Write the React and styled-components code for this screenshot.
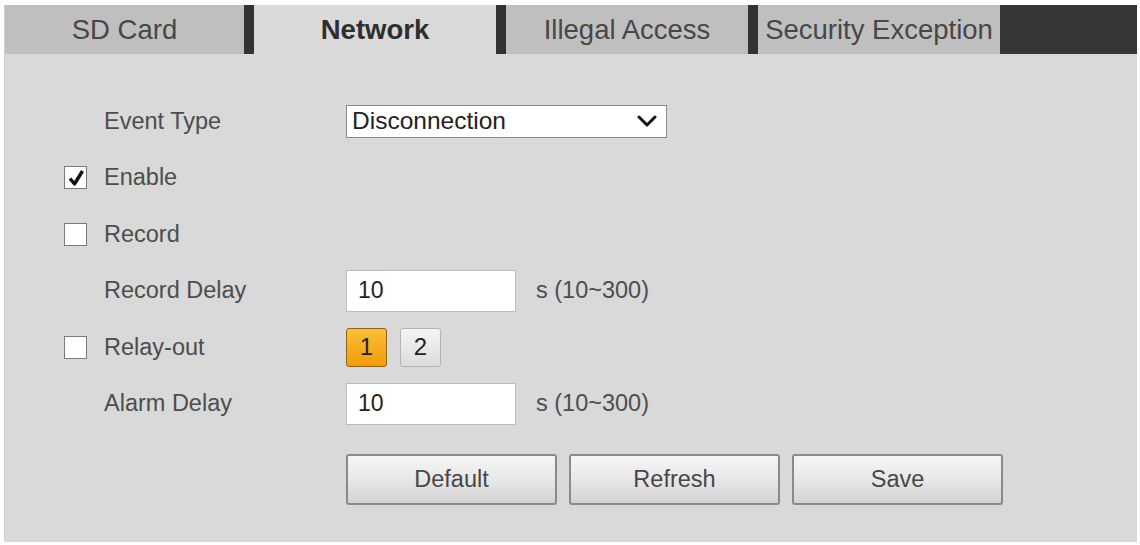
import React, { useState } from 'react';
import styled, { createGlobalStyle } from 'styled-components';

const GlobalStyle = createGlobalStyle`
  html, body {
    margin: 0;
    background: #ffffff;
    font-family: "Liberation Sans", Arial, sans-serif;
  }
`;

const tabs = ['SD Card', 'Network', 'Illegal Access', 'Security Exception'];

const Chevron = () => (
  <svg width="20" height="12" viewBox="0 0 20 12">
    <path d="M2 2 L10 10 L18 2" fill="none" stroke="#111" strokeWidth="3" strokeLinecap="round" strokeLinejoin="round" />
  </svg>
);

const Check = () => (
  <svg width="18" height="18" viewBox="0 0 18 18">
    <path d="M3 9.5 L7.5 15 L15.5 2" fill="none" stroke="#111" strokeWidth="3.4" strokeLinejoin="round" />
  </svg>
);

const App = () => {
  const [active, setActive] = useState(1);
  const [enable, setEnable] = useState(true);
  const [record, setRecord] = useState(false);
  const [relay, setRelay] = useState(false);
  const [channel, setChannel] = useState(1);

  return (
    <>
      <GlobalStyle />
      <Panel>
        <TabBar>
          {tabs.map((t, i) => (
            <Tab key={t} $active={i === active} $first={i === 0} onClick={() => setActive(i)}>
              {t}
            </Tab>
          ))}
          <TabFiller />
        </TabBar>

        <Form>
          <Cell />
          <Label>Event Type</Label>
          <Select>
            <span>Disconnection</span>
            <Chevron />
          </Select>

          <Cell>
            <CheckBox onClick={() => setEnable(!enable)}>{enable && <Check />}</CheckBox>
          </Cell>
          <Label>Enable</Label>
          <Cell />

          <Cell>
            <CheckBox onClick={() => setRecord(!record)}>{record && <Check />}</CheckBox>
          </Cell>
          <Label>Record</Label>
          <Cell />

          <Cell />
          <Label>Record Delay</Label>
          <Field>
            <Input defaultValue="10" />
            <Hint>s (10~300)</Hint>
          </Field>

          <Cell>
            <CheckBox onClick={() => setRelay(!relay)}>{relay && <Check />}</CheckBox>
          </Cell>
          <Label>Relay-out</Label>
          <Field>
            {[1, 2].map((n) => (
              <Channel key={n} $on={channel === n} onClick={() => setChannel(n)}>
                {n}
              </Channel>
            ))}
          </Field>

          <Cell />
          <Label>Alarm Delay</Label>
          <Field>
            <Input defaultValue="10" />
            <Hint>s (10~300)</Hint>
          </Field>
        </Form>

        <Actions>
          <Button>Default</Button>
          <Button>Refresh</Button>
          <Button>Save</Button>
        </Actions>
      </Panel>
    </>
  );
};

const Panel = styled.div`
  margin: 5px 3px 0 5px;
  height: 537px;
  background: #d9d9d9;
  display: flex;
  flex-direction: column;
  box-shadow: -1px 0 0 #cfcfcf;
`;

const TabBar = styled.div`
  display: flex;
  height: 49px;
  flex-shrink: 0;
`;

const Tab = styled.div`
  width: ${(p) => (p.$first ? '239px' : '242px')};
  border-left: ${(p) => (p.$first ? 'none' : '10px solid #333')};
  background: ${(p) => (p.$active ? '#d9d9d9' : '#bfbfbf')};
  color: ${(p) => (p.$active ? '#2e2e2e' : '#474747')};
  font-weight: ${(p) => (p.$active ? 700 : 400)};
  font-size: 27.5px;
  display: flex;
  align-items: center;
  justify-content: center;
  white-space: nowrap;
  cursor: pointer;
`;

const TabFiller = styled.div`
  flex: 1;
  background: #363636;
`;

const Form = styled.div`
  display: grid;
  grid-template-columns: 40px 242px 1fr;
  grid-auto-rows: 56.5px;
  padding: 39px 0 0 59px;
  align-items: center;
`;

const Cell = styled.div`
  display: flex;
  align-items: center;
`;

const Label = styled.div`
  font-size: 23.5px;
  color: #4d4d4d;
`;

const CheckBox = styled.div`
  width: 21px;
  height: 21px;
  background: #fff;
  border: 1px solid #7a7a7a;
  display: flex;
  align-items: center;
  justify-content: center;
  cursor: pointer;
`;

const Select = styled.div`
  width: 321px;
  height: 33px;
  box-sizing: border-box;
  background: #fff;
  border: 1px solid #8c8c8c;
  display: flex;
  align-items: center;
  justify-content: space-between;
  padding: 0 9px 0 5px;
  font-size: 24.5px;
  color: #222;
`;

const Field = styled.div`
  display: flex;
  align-items: center;
  gap: 13px;
`;

const Input = styled.input`
  width: 170px;
  height: 42px;
  box-sizing: border-box;
  border: 1px solid #bcbcbc;
  background: #fff;
  padding: 0 11px;
  font-family: inherit;
  font-size: 23px;
  color: #222;
  outline: none;
  margin-right: 7px;
`;

const Hint = styled.span`
  font-size: 23.5px;
  color: #4d4d4d;
`;

const Channel = styled.div`
  width: 41px;
  height: 39px;
  box-sizing: border-box;
  border-radius: 3px;
  border: 1px solid ${(p) => (p.$on ? '#8f6418' : '#b4b4b4')};
  background: ${(p) => (p.$on ? 'linear-gradient(#fbbf3a, #f29c07)' : 'linear-gradient(#f5f5f5, #dcdcdc)')};
  color: #222;
  font-size: 24px;
  display: flex;
  align-items: center;
  justify-content: center;
  cursor: pointer;
`;

const Actions = styled.div`
  display: flex;
  gap: 12px;
  padding: 22px 0 0 341px;
`;

const Button = styled.button`
  width: 211px;
  height: 51px;
  border: 2px solid #8a8a8a;
  border-radius: 3px;
  background: linear-gradient(#f6f6f6, #e6e6e6 55%, #d2d2d2);
  font-family: inherit;
  font-size: 23.5px;
  color: #474747;
  cursor: pointer;
`;

export default App;
